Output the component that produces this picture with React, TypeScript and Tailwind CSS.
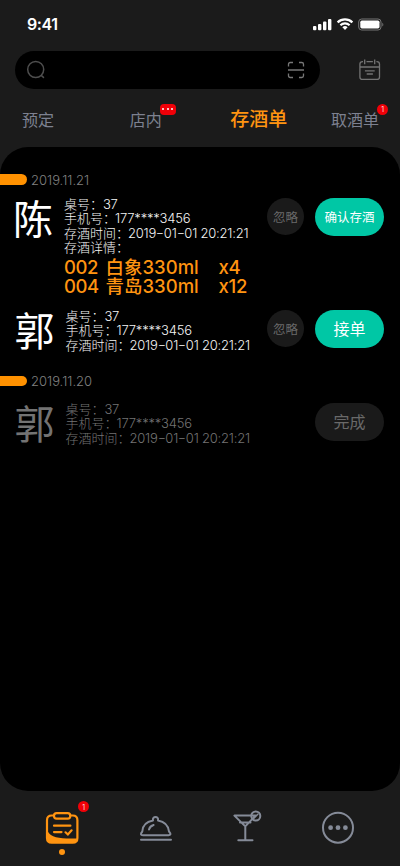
import React from "react";

const stack = "font-['Inter','Noto_Sans_CJK_SC',sans-serif]";

function StatusBar() {
  return (
    <div className="flex h-[51px] items-start justify-between pl-[27px] pr-4 pt-[15px]">
      <span className="text-[16px] font-semibold leading-[18px] tracking-[-0.4px] text-white">9:41</span>
      <svg className="mt-[3px]" width="72" height="13" viewBox="0 0 72 13" fill="none">
        <g fill="#fff">
          <rect x="1" y="8" width="3.4" height="4.2" rx="1" />
          <rect x="6" y="6" width="3.4" height="6.2" rx="1" />
          <rect x="11" y="3.5" width="3.4" height="8.7" rx="1" />
          <rect x="16" y="1" width="3.4" height="11.2" rx="1" />
        </g>
        <path d="M25.6 4.4a10.6 10.6 0 0 1 14.8 0M28.4 7.2a6.7 6.7 0 0 1 9.2 0" stroke="#fff" strokeWidth="2.2" />
        <path d="M30.4 9.3a3.8 3.8 0 0 1 5.2 0L33 12z" fill="#fff" />
        <rect x="46.7" y="1" width="22.3" height="11" rx="3" stroke="#777" />
        <rect x="48.3" y="2.6" width="19.2" height="7.8" rx="1.6" fill="#fff" />
        <path d="M70.3 4.7c1.4.6 1.4 3.2 0 3.8z" fill="#777" />
      </svg>
    </div>
  );
}

function SearchRow() {
  return (
    <div className="flex h-[38px] items-center pl-[15px] pr-[19px]">
      <div className="flex h-[38px] w-[305px] items-center justify-between rounded-full bg-black pl-[11px] pr-[15px]">
        <svg width="20" height="20" viewBox="0 0 20 20" fill="none" stroke="#4e4e4e" strokeWidth="1.5">
          <circle cx="9.7" cy="9.5" r="8" />
          <path d="M15.2 15.4l2.3 2" strokeLinecap="round" />
        </svg>
        <svg width="18" height="18" viewBox="0 0 18 18" fill="none" stroke="#777" strokeWidth="1.3">
          <path d="M1.5 5.5V3.3Q1.5 1.5 3.3 1.5H6M12 1.5h2.7Q16.5 1.5 16.5 3.3v2.2M16.5 12.5v2.2q0 1.8-1.8 1.8H12M6 16.5H3.3q-1.8 0-1.8-1.8v-2.2M1 9h16" />
        </svg>
      </div>
      <svg className="ml-auto" width="22" height="22" viewBox="0 0 22 22" fill="none" stroke="#737373" strokeWidth="1.3">
        <path d="M4 2.6H3.6Q.9 2.6.9 5.1v12.8q0 2.5 2.6 2.5h14.4q2.6 0 2.6-2.5V5.1q0-2.5-2.6-2.5h-.5M7.5 2.6h6.4M.9 8h19.6M5.7.6v4.6M15.7.6v4.6M5.9 11.8h9.8M7.7 15h6.2" />
      </svg>
    </div>
  );
}

function CountBadge({ className }: { className: string }) {
  return (
    <span className={`absolute flex size-[11px] items-center justify-center rounded-full bg-[#f00008] text-[8px] font-light leading-none text-white ${className}`}>
      1
    </span>
  );
}

function Tabs() {
  return (
    <div className="flex h-[58px] items-center justify-between pl-[22px] pr-[21px] pt-[3px] text-[16px] leading-6 text-[#7d8190]">
      <span>预定</span>
      <span className="relative ml-[17px]">
        店内
        <span className="absolute left-[30px] top-[-4px] flex h-[11px] w-4 items-center justify-center gap-[2.5px] rounded-[4px] bg-[#f00008]">
          <i className="size-[2px] rounded-full bg-white" />
          <i className="size-[2px] rounded-full bg-white" />
          <i className="size-[2px] rounded-full bg-white" />
        </span>
      </span>
      <span className="ml-[10px] text-[19px] font-medium text-[#ff9411]">存酒单</span>
      <span className="relative -ml-[15px]">
        取酒单
        <CountBadge className="left-[46px] top-[-4px]" />
      </span>
    </div>
  );
}

function DateHeading({ date }: { date: string }) {
  return (
    <div className="flex h-4 items-center">
      <i className="h-[10.5px] w-[26.5px] rounded-r-full bg-[#ff9100]" />
      <span className="ml-[4.5px] text-[13px] font-light leading-4 text-[#808080]">{date}</span>
    </div>
  );
}

function Hyphen() {
  return <span className="mx-px inline-block scale-x-[1.4]">-</span>;
}

type OrderProps = { name: string; dim?: boolean; inset?: boolean; children?: React.ReactNode; actions: React.ReactNode };

function Order({ name, dim, inset, children, actions }: OrderProps) {
  return (
    <div className={`flex items-start pr-4 ${inset ? "pl-[14.5px]" : "pl-[13px]"} ${dim ? "text-[#737373]" : "text-[#f5f5f5]"}`}>
      <div className={`w-10 shrink-0 pt-[2px] text-[40px] leading-[42px] ${dim ? "" : "text-white"}`}>{name}</div>
      <div className="ml-[11px] whitespace-nowrap text-[13px] font-light leading-[14.5px]">
        <div>桌号：<span className="tracking-[-0.5px]">37</span></div>
        <div>手机号：<span className="-ml-px tracking-[-0.2px]">177****3456</span></div>
        <div>
          存酒时间：
          <span className="-ml-px tracking-[-0.2px]">2019<Hyphen />01<Hyphen />01 20:21:21</span>
        </div>
        {children}
      </div>
      <div className="ml-auto flex gap-[11px] pt-[1.5px]">{actions}</div>
    </div>
  );
}

function Ignore() {
  return <button className="size-[37px] rounded-full bg-[#1a1a1a] pt-[3px] text-[12.5px] leading-none text-[#696969]">忽略</button>;
}

function Pill({ label, className }: { label: string; className: string }) {
  return <button className={`h-[37.5px] w-[69px] rounded-full leading-none ${className}`}>{label}</button>;
}

function Item({ code, title, count }: { code: string; title: string; count: string }) {
  return (
    <div className="flex h-[19px] items-center text-[18.5px] font-medium leading-[19px] text-[#ff9411]">
      <span className="w-[41.5px] tracking-[-0.4px]">{code}</span>
      <span className="w-[113px]">{title}</span>
      <span className="tracking-[-0.2px]">{count}</span>
    </div>
  );
}

function BottomNav() {
  return (
    <nav className="flex h-[75px] items-start justify-between px-[45px] pt-4">
      <div className="relative flex w-[34px] flex-col items-center pt-[3px]">
        <svg width="34" height="36" viewBox="0 0 34 36" fill="none" stroke="#ff9411" strokeWidth="2.2" strokeLinecap="round">
          <path d="M9 5.5H6.7Q2 5.5 2 10.2V28Q2 32.7 6.7 32.7H27.7Q32.4 32.7 32.4 28V10.2Q32.4 5.5 27.7 5.5H25" />
          <rect x="9" y="3.1" width="16.3" height="5.5" rx="2.6" />
          <path d="M9 15.7h16.4M9 22.1h7.5M20.5 22.3l2.4 2.2 3.7-4.2" />
          <path d="M2.5 21C6.5 28.7 17 28.6 32 28.4Q32 33 27.5 33H7Q2.5 33 2.5 28Z" fill="#ff9411" stroke="none" />
        </svg>
        <i className="mt-[3px] size-[6px] rounded-full bg-[#ff9411]" />
        <CountBadge className="left-[33px] top-[-6px]" />
      </div>
      <svg className="ml-[2px]" width="36" height="42" viewBox="0 0 36 42" fill="none" stroke="#858b98" strokeWidth="2" strokeLinecap="round" strokeLinejoin="round">
        <path d="M15 13.5C13.8 8.7 21.2 8.7 20 13.5C26.3 14.6 30.3 18.5 31 24.5Q34.2 28 30.6 28.2H5.1Q1.2 28 4.3 24.5C4.6 18.5 8.7 14.6 15 13.5ZM3 32.7H33M11 22.5Q12 19 15.6 18" />
      </svg>
      <svg width="34" height="42" viewBox="0 0 34 42" fill="none" stroke="#858b98" strokeWidth="2" strokeLinecap="round" strokeLinejoin="round">
        <path d="M4.4 8.6H25.5L15.3 19.4ZM10 15.4H20.5M15.3 20V33.3M8.3 33.3H22.5" />
        <circle cx="25.8" cy="9" r="4.5" />
        <path d="M23.8 11.3l4-4" strokeWidth="1.6" />
      </svg>
      <svg width="34" height="42" viewBox="0 0 34 42" fill="none">
        <circle cx="17" cy="20.7" r="15" stroke="#858b98" strokeWidth="2" />
        <g fill="#858b98"><circle cx="9.6" cy="20.7" r="2.4" /><circle cx="17" cy="20.7" r="2.4" /><circle cx="24.4" cy="20.7" r="2.4" /></g>
      </svg>
    </nav>
  );
}

export default function App() {
  return (
    <div className={`flex h-[866px] w-[400px] flex-col overflow-hidden bg-[#1b1b1b] ${stack}`}>
      <StatusBar />
      <SearchRow />
      <Tabs />
      <main className="h-[644px] rounded-[28px] bg-black pt-[24.5px]">
        <DateHeading date="2019.11.21" />
        <div className="mt-[9px] h-[112px]">
          <Order
            name="陈"
            actions={<><Ignore /><Pill label="确认存酒" className="bg-[#00c7a5] pt-[2px] text-[12.5px] text-white" /></>}
          >
            <div>存酒详情：</div>
            <div className="mt-[3px]">
              <Item code="002" title="白象330ml" count="x4" />
              <Item code="004" title="青岛330ml" count="x12" />
            </div>
          </Order>
        </div>
        <div className="h-[64.5px]">
          <Order inset name="郭" actions={<><Ignore /><Pill label="接单" className="bg-[#00c7a5] text-[16px] text-white" /></>} />
        </div>
        <DateHeading date="2019.11.20" />
        <div className="mt-[12.5px]">
          <Order inset dim name="郭" actions={<Pill label="完成" className="bg-[#1a1a1a] text-[16px] text-[#696969]" />} />
        </div>
      </main>
      <BottomNav />
    </div>
  );
}
